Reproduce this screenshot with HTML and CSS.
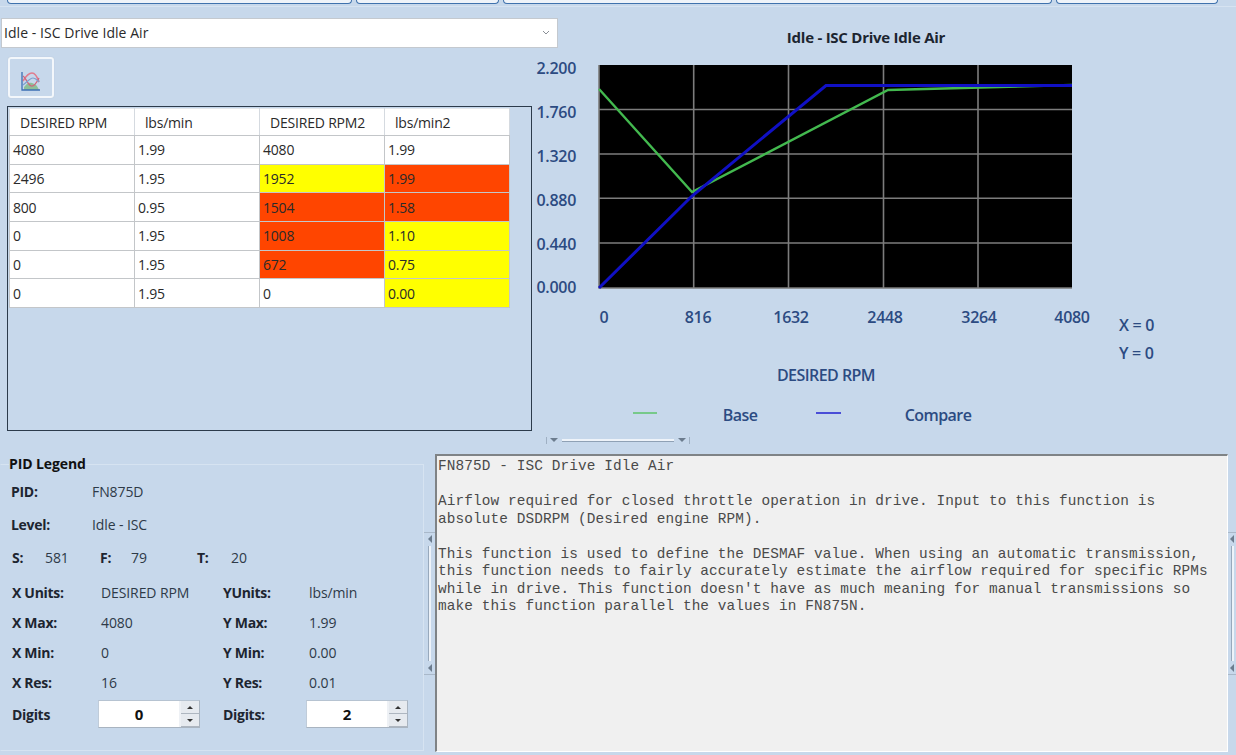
FILE: index.html
```html
<!DOCTYPE html>
<html lang="en">
<head>
<meta charset="utf-8">
<title>Idle - ISC Drive Idle Air</title>
<link rel="stylesheet" href="styles.css">
</head>
<body>
<div class="tabs">
  <div class="tab tab-a"></div>
  <div class="tab tab-b"></div>
  <div class="tab tab-c"></div>
  <div class="tab tab-d"></div>
</div>
<div class="head-row">
  <div class="combo"><span>Idle - ISC Drive Idle Air</span>
    <svg class="chev" width="8" height="5" viewBox="0 0 8 5"><path d="M1 1l3 3 3-3" fill="none" stroke="#8a8f96" stroke-width="1"/></svg>
  </div>
  <div class="chart-title">Idle - ISC Drive Idle Air</div>
</div>
<div class="top-row">
  <div class="left">
    <button class="graph-btn" type="button" aria-label="Graph">
      <svg width="19" height="19" viewBox="0 0 19 19">
        <path d="M3 15c3-4 5-5 8-4s5 2 7 7H3z" fill="#8dbf98"/>
        <path d="M2 9c3-5 6-8 9-8s5 3 7 9" fill="none" stroke="#e07c8e" stroke-width="1.700"/>
        <path d="M2 4c3 2 5 9 8 10s6-4 8-8" fill="none" stroke="#d0667c" stroke-width="1.300"/>
        <path d="M2 13c4-3 7-7 10-7s4 2 6 4" fill="none" stroke="#7f9fce" stroke-width="1.200"/>
        <path d="M1 0v18h18" fill="none" stroke="#3e6fb4" stroke-width="1.300"/>
      </svg>
    </button>
    <div class="table-box">
      <table class="data">
        <thead><tr><th>DESIRED RPM</th><th>lbs/min</th><th>DESIRED RPM2</th><th>lbs/min2</th></tr></thead>
        <tbody>
          <tr><td>4080</td><td>1.99</td><td>4080</td><td>1.99</td></tr>
          <tr><td>2496</td><td>1.95</td><td class="y">1952</td><td class="r">1.99</td></tr>
          <tr><td>800</td><td>0.95</td><td class="r">1504</td><td class="r">1.58</td></tr>
          <tr><td>0</td><td>1.95</td><td class="r">1008</td><td class="y">1.10</td></tr>
          <tr><td>0</td><td>1.95</td><td class="r">672</td><td class="y">0.75</td></tr>
          <tr><td>0</td><td>1.95</td><td>0</td><td class="y">0.00</td></tr>
        </tbody>
      </table>
    </div>
  </div>
  <svg class="chart" width="704" height="384" viewBox="532 47 704 384">
    <rect x="599" y="65" width="473" height="223" fill="#000"/>
    <g class="grid">
      <path d="M693.700 65v223M788.500 65v223M883.500 65v223M978 65v223"/>
      <path d="M599 109.500h473M599 154h473M599 198.300h473M599 243h473"/>
      <path d="M599 65v223h473"/>
    </g>
    <polyline class="ln green" points="599,89 692,192 888,90 1072,85"/>
    <polyline class="ln blue" points="599,288 692,196 826,85.500 1072,85.500"/>
    <g class="yl">
      <text x="576" y="74">2.200</text>
      <text x="576" y="118">1.760</text>
      <text x="576" y="162">1.320</text>
      <text x="576" y="206">0.880</text>
      <text x="576" y="250">0.440</text>
      <text x="576" y="293">0.000</text>
    </g>
    <g class="xl">
      <text x="604" y="323">0</text>
      <text x="698" y="323">816</text>
      <text x="791" y="323">1632</text>
      <text x="885" y="323">2448</text>
      <text x="979" y="323">3264</text>
      <text x="1072" y="323">4080</text>
    </g>
    <g class="xl words">
      <text x="826" y="381">DESIRED RPM</text>
      <text x="740" y="421">Base</text>
      <text x="938" y="421">Compare</text>
    </g>
    <g class="rd">
      <text x="1119" y="331">X = 0</text>
      <text x="1119" y="359">Y = 0</text>
    </g>
    <path d="M633 413h24" stroke="#5cc46a" stroke-width="1.500"/>
    <path d="M816 413h25" stroke="#2020d0" stroke-width="1.500"/>
  </svg>
</div>
<div class="hsplit">
  <i class="bar"></i><i class="tri"></i><i class="track"></i><i class="tri"></i><i class="bar"></i>
</div>
<div class="bottom-row">
  <fieldset class="legend">
    <legend>PID Legend</legend>
    <div class="pid-row"><b>PID:</b><span>FN875D</span></div>
    <div class="pid-row"><b>Level:</b><span>Idle - ISC</span></div>
    <div class="stat-row">
      <b class="s1">S:</b><span class="s2">581</span>
      <b class="s3">F:</b><span class="s4">79</span>
      <b class="s5">T:</b><span>20</span>
    </div>
    <div class="info">
      <b>X Units:</b><span>DESIRED RPM</span><b>YUnits:</b><span>lbs/min</span>
      <b>X Max:</b><span>4080</span><b>Y Max:</b><span>1.99</span>
      <b>X Min:</b><span>0</span><b>Y Min:</b><span>0.00</span>
      <b>X Res:</b><span>16</span><b>Y Res:</b><span>0.01</span>
    </div>
    <div class="digits">
      <b>Digits</b>
      <div class="spin"><span class="val">0</span><span class="btns"><i class="up"></i><i class="down"></i></span></div>
      <b>Digits:</b>
      <div class="spin"><span class="val">2</span><span class="btns"><i class="up"></i><i class="down"></i></span></div>
    </div>
  </fieldset>
  <div class="vsplit"><i class="tick"></i><i class="arr"></i><i class="rail"></i><i class="arr"></i><i class="tick"></i></div>
  <pre class="desc">FN875D - ISC Drive Idle Air

Airflow required for closed throttle operation in drive. Input to this function is
absolute DSDRPM (Desired engine RPM).

This function is used to define the DESMAF value. When using an automatic transmission,
this function needs to fairly accurately estimate the airflow required for specific RPMs
while in drive. This function doesn't have as much meaning for manual transmissions so
make this function parallel the values in FN875N.</pre>
  <div class="vsplit vsplit-r"><i class="tick"></i><i class="arr"></i><i class="rail"></i><i class="arr"></i><i class="tick"></i></div>
</div>
</body>
</html>
```
FILE: styles.css
```css
* { box-sizing: border-box; }
html, body { margin: 0; padding: 0; }
body {
  width: 1236px;
  height: 755px;
  overflow: hidden;
  background: #c7d8eb;
  font-family: "Open Sans", "Noto Sans", sans-serif;
  font-size: 14px;
  color: #222;
}
.tabs {
  height: 7px;
  display: flex;
  gap: 4px;
  padding-left: 7px;
  border-bottom: 1px solid #d6e3f1;
}
.tab {
  height: 4px;
  background: #eef3f9;
  border: 1px solid #3f72ad;
  border-top: 0;
  border-radius: 0 0 5px 5px;
}
.tab-a { width: 345px; }
.tab-b { width: 143px; }
.tab-c { width: 549px; }
.tab-d { width: 162px; }
.head-row {
  display: flex;
  align-items: flex-start;
  padding: 11px 0 0 1px;
  height: 40px;
}
.combo {
  width: 557px;
  height: 30px;
  flex: none;
  background: #fff;
  border: 1px solid #c4c9cf;
  display: flex;
  align-items: center;
  justify-content: space-between;
  padding: 0 7px 1px 2px;
  font-size: 14px;
  letter-spacing: .05px;
  color: #2a2a2a;
}
.chart-title {
  flex: 1;
  padding: 10px 62px 0 0;
  text-align: center;
  font-weight: 700;
  font-size: 15px;
  letter-spacing: -.25px;
  line-height: 18px;
  color: #1c2530;
}
.top-row {
  display: flex;
  height: 384px;
}
.left {
  width: 532px;
  flex: none;
  padding: 10px 0 0 7px;
}
.graph-btn {
  display: block;
  width: 46px;
  height: 41px;
  margin: 0 0 8px 1px;
  padding: 0;
  background: #c7d8eb;
  border: 2px solid #f3f7fb;
  border-radius: 3px;
  box-shadow: 0 0 1px #aab8c8;
}
.graph-btn svg { display: block; margin: 7px 0 0 11px; }
.table-box {
  width: 525px;
  height: 325px;
  border: 1px solid #2c3b4b;
  padding: 1px 0 0 1px;
}
.data {
  border-collapse: collapse;
  table-layout: fixed;
  width: 501px;
  font-size: 14px;
  letter-spacing: -.2px;
  color: #2a2a2a;
}
.data th, .data td {
  width: 125px;
  padding: 0 0 0 3px;
  text-align: left;
  font-weight: 400;
  background: #fff;
  border: 1px solid #c3c6c9;
  height: 28.67px;
  white-space: nowrap;
  overflow: hidden;
}
.data th {
  height: 27px;
  padding-left: 10px;
  border-color: #e4e8ec #d5dae0 #c3c6c9;
}
.data td.y { background: #ffff00; }
.data td.r { background: #ff4500; }
.chart { display: block; flex: none; }
.grid path { stroke: #7c7c7c; stroke-width: 1.600; fill: none; }
.ln { fill: none; stroke-width: 2.400; }
.green { stroke: #43b94f; }
.blue { stroke: #1010c4; stroke-width: 3; }
.yl text, .xl text, .rd text {
  font-family: "Open Sans", "Noto Sans", sans-serif;
  font-size: 16px;
  font-weight: 600;
  letter-spacing: -.3px;
  fill: #2c4b82;
}
.yl text { text-anchor: end; }
.xl text { text-anchor: middle; }
.xl.words text { letter-spacing: -.55px; }
.hsplit {
  height: 8px;
  margin-top: 5px;
  padding-left: 546px;
  display: flex;
  align-items: center;
  gap: 3px;
}
.hsplit .bar { width: 1px; height: 7px; background: #9fb0c3; }
.hsplit .tri {
  width: 0; height: 0;
  border-left: 4px solid transparent;
  border-right: 4px solid transparent;
  border-top: 4px solid #6c7c8e;
}
.hsplit .track {
  width: 112px;
  height: 3px;
  background: #eef3f9;
  border-bottom: 1px solid #8fa1b5;
  margin: 0 1px;
}
.bottom-row {
  display: flex;
  height: 301px;
  padding: 3px 0;
  margin-top: 7px;
}
.legend {
  width: 424px;
  flex: none;
  margin: 1px 0 0;
  padding: 2px 0 0 8px;
  height: 296px;
  border: 1px solid #d6e3f1;
  border-left-color: transparent;
  font-size: 14px;
  letter-spacing: -.1px;
}
.legend legend {
  font-weight: 700;
  font-size: 14px;
  color: #111;
  padding: 0;
  letter-spacing: -.1px;
  line-height: 18px;
}
.legend b { font-weight: 700; color: #1d2530; letter-spacing: -.3px; }
.legend span { color: #2e3a48; }
.pid-row {
  display: flex;
  align-items: center;
  height: 33px;
  padding-left: 2px;
}
.pid-row b { width: 81px; }
.stat-row {
  display: flex;
  align-items: center;
  height: 33px;
  padding-left: 3px;
}
.s1 { width: 33px; }
.s2 { width: 55px; }
.s3 { width: 31px; }
.s4 { width: 66px; }
.s5 { width: 34px; }
.info {
  display: grid;
  grid-template-columns: 89px 122px 86px 1fr;
  grid-auto-rows: 30px;
  align-items: center;
  padding: 3px 0 0 3px;
}
.digits {
  display: grid;
  grid-template-columns: 86px 125px 83px 103px;
  height: 28px;
  margin-top: 3px;
  padding-left: 3px;
  align-items: center;
}
.spin {
  display: flex;
  width: 102px;
  height: 28px;
  background: #fff;
  border: 1px solid #a9b4c0;
  border-left-color: #c0ccd9;
  border-top-color: #b6c3d1;
}
.spin .val {
  flex: 1;
  text-align: center;
  font-weight: 700;
  font-size: 15px;
  line-height: 26px;
  color: #111;
}
.spin .btns {
  width: 20px;
  display: flex;
  flex-direction: column;
  background: #e6eaef;
  border-left: 2px solid #eef1f5;
}
.spin i {
  flex: 1;
  display: flex;
  align-items: center;
  justify-content: center;
  border-bottom: 1px solid #aeb6c0;
}
.spin i::before {
  content: "";
  width: 0; height: 0;
  border-left: 3px solid transparent;
  border-right: 3px solid transparent;
}
.spin .up::before { border-bottom: 3px solid #333; }
.spin .down::before { border-top: 3px solid #333; }
.vsplit {
  width: 11px;
  flex: none;
  display: flex;
  flex-direction: column;
  align-items: center;
  padding-top: 78px;
}
.vsplit-r { width: 8px; }
.vsplit .tick {
  width: 100%;
  height: 1px;
  flex: none;
  background: #a9b8c9;
  margin: 0 0 2px;
}
.vsplit .tick:last-child { margin: 2px 0 0; }
.vsplit .arr {
  width: 0; height: 0;
  border-top: 4px solid transparent;
  border-bottom: 4px solid transparent;
  border-right: 4px solid #6c7c8e;
  flex: none;
}
.vsplit .rail {
  width: 3px;
  height: 115px;
  margin: 3px 0;
  flex: none;
  background: #eef3f9;
  border-left: 1px solid #98a9bc;
}
.desc {
  width: 793px;
  flex: none;
  margin: 0;
  height: 298px;
  padding: 2px 0 0 1px;
  background: #f0f0f0;
  border-top: 2px solid #7f8386;
  border-left: 2px solid #7f8386;
  border-right: 1px solid #fff;
  border-bottom: 1px solid #fff;
  font-family: "Liberation Mono", "DejaVu Sans Mono", monospace;
  font-size: 14.4px;
  letter-spacing: .11px;
  line-height: 17.5px;
  color: #4a4a4a;
  white-space: pre;
  overflow: hidden;
}
```
